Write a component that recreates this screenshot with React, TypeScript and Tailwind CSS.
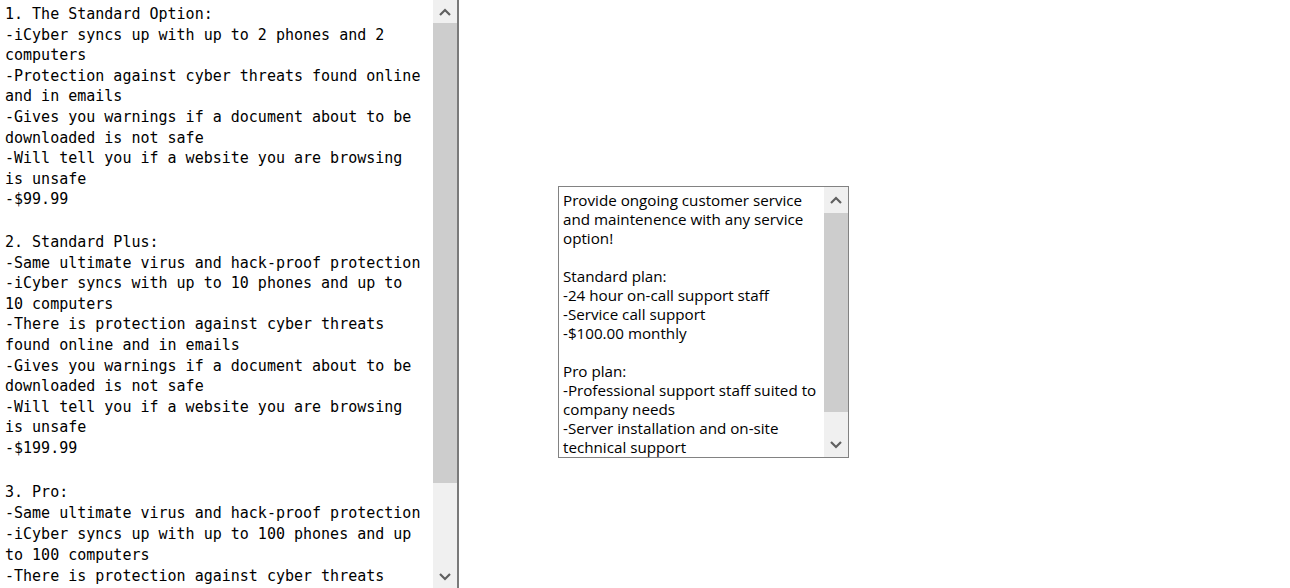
import React from "react";

const options: string[][] = [
  [
    "1. The Standard Option:",
    "-iCyber syncs up with up to 2 phones and 2",
    "computers",
    "-Protection against cyber threats found online",
    "and in emails",
    "-Gives you warnings if a document about to be",
    "downloaded is not safe",
    "-Will tell you if a website you are browsing",
    "is unsafe",
    "-$99.99",
  ],
  [
    "2. Standard Plus:",
    "-Same ultimate virus and hack-proof protection",
    "-iCyber syncs with up to 10 phones and up to",
    "10 computers",
    "-There is protection against cyber threats",
    "found online and in emails",
    "-Gives you warnings if a document about to be",
    "downloaded is not safe",
    "-Will tell you if a website you are browsing",
    "is unsafe",
    "-$199.99",
  ],
  [
    "3. Pro:",
    "-Same ultimate virus and hack-proof protection",
    "-iCyber syncs up with up to 100 phones and up",
    "to 100 computers",
    "-There is protection against cyber threats",
  ],
];

const serviceLines = [
  "Provide ongoing customer service",
  "and maintenence with any service",
  "option!",
  "",
  "Standard plan:",
  "-24 hour on-call support staff",
  "-Service call support",
  "-$100.00 monthly",
  "",
  "Pro plan:",
  "-Professional support staff suited to",
  "company needs",
  "-Server installation and on-site",
  "technical support",
];

function Chevron({ up }: { up?: boolean }) {
  return (
    <svg width="12" height="8" viewBox="0 0 12 8" className="block">
      <path
        d={up ? "M1 7 L6 2 L11 7" : "M1 1 L6 6 L11 1"}
        fill="none"
        stroke="#606060"
        strokeWidth="2.2"
      />
    </svg>
  );
}

function ScrollBar({ top, thumb, rest }: { top: number; thumb: number; rest: number }) {
  return (
    <div className="flex w-[24px] shrink-0 flex-col bg-[#f0f0f0]">
      <div className="flex shrink-0 items-center justify-center" style={{ height: top }}>
        <Chevron up />
      </div>
      <div className="shrink-0 bg-[#cdcdcd]" style={{ height: thumb }} />
      <div className="shrink-0" style={{ height: rest }} />
      <div className="flex flex-1 items-center justify-center">
        <Chevron />
      </div>
    </div>
  );
}

export default function App() {
  return (
    <div className="flex h-[588px] w-[1290px] items-start overflow-hidden bg-white">
      <div className="flex h-[588px] w-[459px] shrink-0 border-r-2 border-[#7a7a7a]">
        <div className="flex-1 overflow-hidden pl-[5px] pt-[4px] font-['DejaVu_Sans_Mono',monospace] text-[15px] leading-[20.6px] text-black">
          <div className="mb-[22px]">
            {options[0].map((line, j) => (
              <div key={j} className="whitespace-pre">
                {line}
              </div>
            ))}
          </div>
          <div className="mb-[24px]">
            {options[1].map((line, j) => (
              <div key={j} className="whitespace-pre">
                {line}
              </div>
            ))}
          </div>
          <div className="leading-[21px]">
            {options[2].map((line, j) => (
              <div key={j} className="whitespace-pre">
                {line}
              </div>
            ))}
          </div>
        </div>
        <ScrollBar top={23} thumb={460} rest={82} />
      </div>

      <div className="ml-[99px] mt-[186px] flex h-[272px] w-[291px] shrink-0 border border-[#828282]">
        <div className="flex-1 overflow-hidden pl-[4px] pt-[4px] font-['Open_Sans',sans-serif] text-[15.2px] leading-[19px] text-black">
          {serviceLines.map((line, i) => (
            <div key={i} className="h-[19px] whitespace-pre">
              {line}
            </div>
          ))}
        </div>
        <ScrollBar top={26} thumb={199} rest={21} />
      </div>
    </div>
  );
}
